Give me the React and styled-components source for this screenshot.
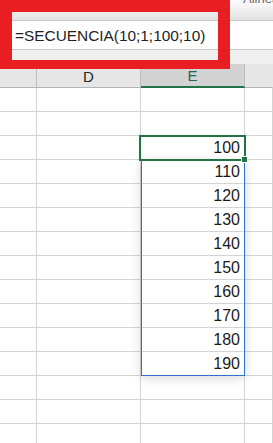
import React from "react";
import styled, { createGlobalStyle } from "styled-components";

const Global = createGlobalStyle`
  html, body { margin: 0; padding: 0; background: #fff; overflow: hidden; }
  * { box-sizing: border-box; }
`;

const Page = styled.div`
  position: relative;
  width: 273px;
  height: 443px;
  overflow: hidden;
  background: #fff;
  font-family: "Liberation Sans", Arial, sans-serif;
`;

const Ribbon = styled.div`
  height: 21px;
  display: flex;
  justify-content: flex-end;
  align-items: flex-start;
  background: linear-gradient(#fafafa 0%, #f4f4f4 35%, #e2e2e2 100%);
  border-bottom: 1px solid #c8c8c8;
  overflow: hidden;
`;

const RibbonLabel = styled.span`
  width: 30px;
  margin-top: -9px;
  font-size: 13px;
  color: #666;
  white-space: nowrap;
`;

const FormulaBar = styled.div`
  height: 29px;
  display: flex;
  align-items: center;
  padding-left: 15px;
  padding-top: 1px;
  background: #fff;
  border-bottom: 1px solid #c6c6c6;
  font-size: 15.4px;
  color: #1f1f1f;
  white-space: nowrap;
`;

const Gap = styled.div`
  height: 14px;
  background: #efefef;
`;

const Grid = styled.div`
  position: relative;
  display: grid;
  grid-template-columns: 37px 104px 104px 1fr;
  grid-auto-rows: 24px;
`;

const HeadCell = styled.div`
  display: flex;
  align-items: center;
  justify-content: center;
  background: ${(p) => (p.$active ? "#d3d3d3" : "#e6e6e6")};
  border-right: 1px solid ${(p) => (p.$last ? "transparent" : "#bcbcbc")};
  border-bottom: ${(p) => (p.$active ? "2px solid #217346" : "1px solid #b4b4b4")};
  color: ${(p) => (p.$active ? "#1d6b4a" : "#262626")};
  font-size: 15px;
  padding-top: 1px;
`;

const Cell = styled.div`
  display: flex;
  align-items: center;
  justify-content: flex-end;
  padding-right: 4px;
  border-right: 1px solid #d4d4d4;
  border-bottom: 1px solid #d4d4d4;
  font-size: 16px;
  color: #1a1a1a;
  background: #fff;
`;

const Spill = styled.div`
  position: absolute;
  left: 141px;
  top: 96px;
  width: 104px;
  height: 216px;
  border: 1px solid #2f6fce;
  box-shadow: 0 2px 10px rgba(0, 0, 0, 0.16);
  pointer-events: none;
`;

const Selected = styled.div`
  position: absolute;
  left: 139px;
  top: 71px;
  width: 107px;
  height: 26px;
  border: 2px solid #217346;
  pointer-events: none;
`;

const Handle = styled.div`
  position: absolute;
  left: 241px;
  top: 92px;
  width: 7px;
  height: 7px;
  background: #217346;
  border: 1px solid #fff;
  pointer-events: none;
`;

const Callout = styled.div`
  position: absolute;
  left: 0;
  top: 0;
  width: 230px;
  height: 69px;
  border-style: solid;
  border-color: #e81e22;
  border-width: 12px 12px 9px 12px;
  pointer-events: none;
`;

const values = { 2: 100, 3: 110, 4: 120, 5: 130, 6: 140, 7: 150, 8: 160, 9: 170, 10: 180, 11: 190 };

export default function App() {
  const rows = Array.from({ length: 15 }, (_, i) => i);
  return (
    <Page>
      <Global />
      <Ribbon>
        <RibbonLabel>Alineación</RibbonLabel>
      </Ribbon>
      <FormulaBar>=SECUENCIA(10;1;100;10)</FormulaBar>
      <Gap />
      <Grid>
        <HeadCell />
        <HeadCell>D</HeadCell>
        <HeadCell $active>E</HeadCell>
        <HeadCell $last />
        {rows.map((r) => (
          <React.Fragment key={r}>
            <Cell />
            <Cell />
            <Cell>{values[r] ?? ""}</Cell>
            <Cell />
          </React.Fragment>
        ))}
        <Spill />
        <Selected />
        <Handle />
      </Grid>
      <Callout />
    </Page>
  );
}
